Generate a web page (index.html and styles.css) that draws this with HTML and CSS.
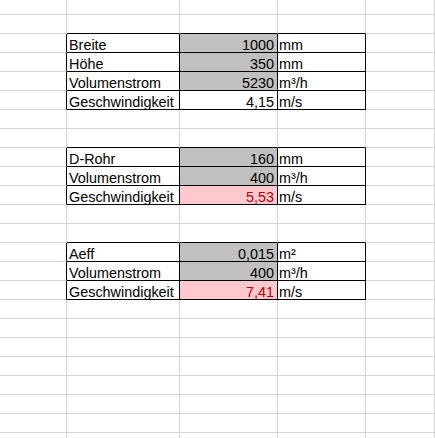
FILE: index.html
```html
<!DOCTYPE html>
<html lang="de">
<head>
<meta charset="utf-8">
<title>Tabelle</title>
<link rel="stylesheet" href="styles.css">
</head>
<body>
<div class="sheet">
  <div class="row top"><div class="cell ca"></div><div class="cell cb"></div><div class="cell cc"></div><div class="cell cd"></div><div class="cell ce"></div></div>
  <div class="row"><div class="cell ca"></div><div class="cell cb bt"></div><div class="cell cc bt"></div><div class="cell cd bt"></div><div class="cell ce"></div></div>

  <div class="row"><div class="cell ca bl"></div><div class="cell cb bx label">Breite</div><div class="cell cc bx num input">1000</div><div class="cell cd bx unit">mm</div><div class="cell ce"></div></div>
  <div class="row"><div class="cell ca bl"></div><div class="cell cb bx label">Höhe</div><div class="cell cc bx num input">350</div><div class="cell cd bx unit">mm</div><div class="cell ce"></div></div>
  <div class="row"><div class="cell ca bl"></div><div class="cell cb bx label">Volumenstrom</div><div class="cell cc bx num input">5230</div><div class="cell cd bx unit">m³/h</div><div class="cell ce"></div></div>
  <div class="row"><div class="cell ca bl"></div><div class="cell cb bx label">Geschwindigkeit</div><div class="cell cc bx num">4,15</div><div class="cell cd bx unit">m/s</div><div class="cell ce"></div></div>

  <div class="row"><div class="cell ca"></div><div class="cell cb"></div><div class="cell cc"></div><div class="cell cd"></div><div class="cell ce"></div></div>
  <div class="row"><div class="cell ca"></div><div class="cell cb bt"></div><div class="cell cc bt"></div><div class="cell cd bt"></div><div class="cell ce"></div></div>

  <div class="row"><div class="cell ca bl"></div><div class="cell cb bx label">D-Rohr</div><div class="cell cc bx num input">160</div><div class="cell cd bx unit">mm</div><div class="cell ce"></div></div>
  <div class="row"><div class="cell ca bl"></div><div class="cell cb bx label">Volumenstrom</div><div class="cell cc bx num input">400</div><div class="cell cd bx unit">m³/h</div><div class="cell ce"></div></div>
  <div class="row"><div class="cell ca bl"></div><div class="cell cb bx label">Geschwindigkeit</div><div class="cell cc bx num warn">5,53</div><div class="cell cd bx unit">m/s</div><div class="cell ce"></div></div>

  <div class="row"><div class="cell ca"></div><div class="cell cb"></div><div class="cell cc"></div><div class="cell cd"></div><div class="cell ce"></div></div>
  <div class="row"><div class="cell ca"></div><div class="cell cb bt"></div><div class="cell cc bt"></div><div class="cell cd bt"></div><div class="cell ce"></div></div>

  <div class="row"><div class="cell ca bl"></div><div class="cell cb bx label">Aeff</div><div class="cell cc bx num input">0,015</div><div class="cell cd bx unit">m²</div><div class="cell ce"></div></div>
  <div class="row"><div class="cell ca bl"></div><div class="cell cb bx label">Volumenstrom</div><div class="cell cc bx num input">400</div><div class="cell cd bx unit">m³/h</div><div class="cell ce"></div></div>
  <div class="row"><div class="cell ca bl"></div><div class="cell cb bx label">Geschwindigkeit</div><div class="cell cc bx num warn">7,41</div><div class="cell cd bx unit">m/s</div><div class="cell ce"></div></div>

  <div class="row"><div class="cell ca"></div><div class="cell cb"></div><div class="cell cc"></div><div class="cell cd"></div><div class="cell ce"></div></div>
  <div class="row"><div class="cell ca"></div><div class="cell cb"></div><div class="cell cc"></div><div class="cell cd"></div><div class="cell ce"></div></div>
  <div class="row"><div class="cell ca"></div><div class="cell cb"></div><div class="cell cc"></div><div class="cell cd"></div><div class="cell ce"></div></div>
  <div class="row"><div class="cell ca"></div><div class="cell cb"></div><div class="cell cc"></div><div class="cell cd"></div><div class="cell ce"></div></div>
  <div class="row"><div class="cell ca"></div><div class="cell cb"></div><div class="cell cc"></div><div class="cell cd"></div><div class="cell ce"></div></div>
  <div class="row"><div class="cell ca"></div><div class="cell cb"></div><div class="cell cc"></div><div class="cell cd"></div><div class="cell ce"></div></div>
  <div class="row"><div class="cell ca"></div><div class="cell cb"></div><div class="cell cc"></div><div class="cell cd"></div><div class="cell ce"></div></div>
  <div class="row"><div class="cell ca"></div><div class="cell cb"></div><div class="cell cc"></div><div class="cell cd"></div><div class="cell ce"></div></div>
</div>
</body>
</html>
```

FILE: styles.css
```css
html, body {
  margin: 0;
  padding: 0;
  background: #ffffff;
  overflow: hidden;
}

.sheet {
  width: 435px;
  height: 438px;
  overflow: hidden;
  font-family: "Liberation Sans", Arial, sans-serif;
  font-size: 14.4px;
  color: #000000;
}

.row {
  display: flex;
  height: 19px;
}

.row.top {
  height: 15px;
}

.cell {
  box-sizing: border-box;
  height: 100%;
  border-right: 1px solid #d4d4d4;
  border-bottom: 1px solid #d4d4d4;
  padding: 2px 1px 0 1px;
  line-height: 18px;
  white-space: nowrap;
  overflow: visible;
  flex: none;
}

.ca { width: 67px; }
.cb { width: 113px; }
.cc { width: 98px; }
.cd { width: 88px; }
.ce { flex: 1 1 auto; }

.bl { border-right-color: #000000; }
.bt { border-bottom-color: #000000; }
.bx {
  border-right-color: #000000;
  border-bottom-color: #000000;
}

.label { padding-left: 2px; }

.num {
  text-align: right;
  padding-right: 3px;
}

.unit { padding-left: 1px; }

.input { background: #c0c0c0; }

.warn {
  background: #ffc7ce;
  color: #b3000c;
}
```
